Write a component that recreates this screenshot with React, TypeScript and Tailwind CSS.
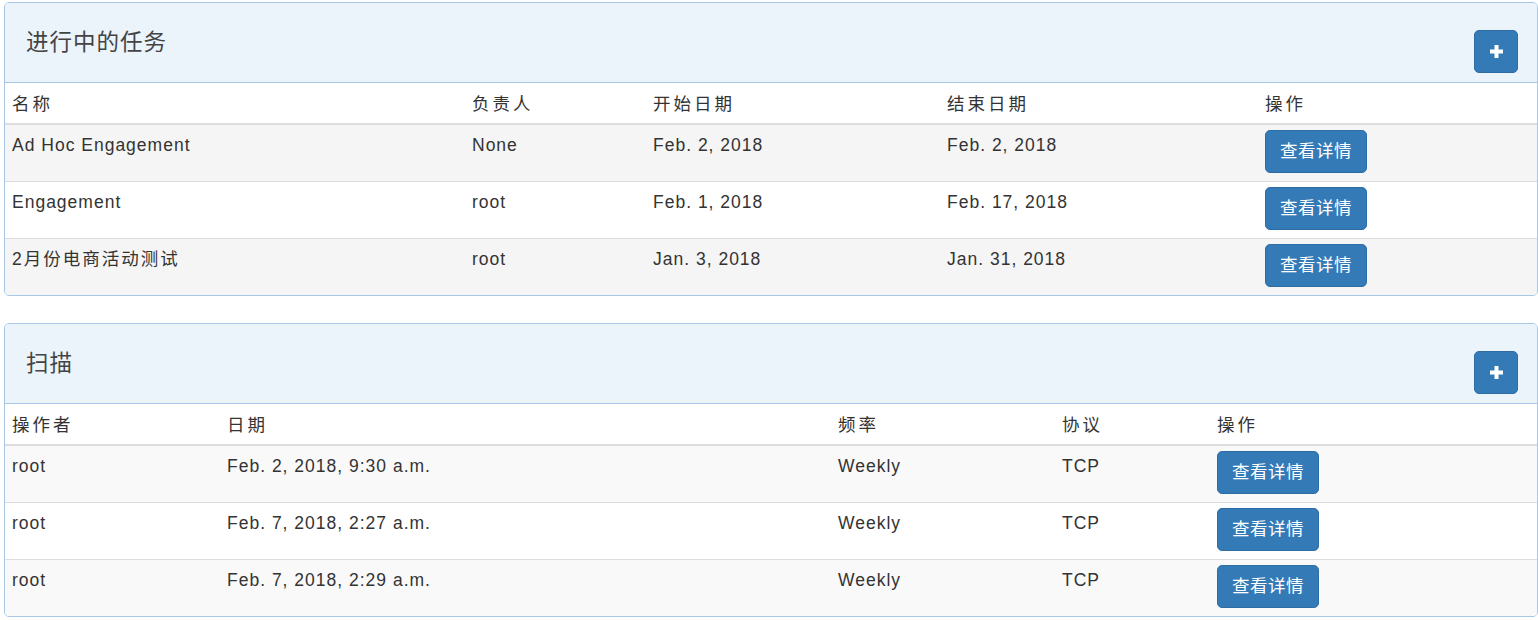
import React from "react";

const font = {
  fontFamily: '"Liberation Sans", Arial, "Noto Sans CJK SC", sans-serif',
};

const PlusButton = () => (
  <button className="mt-[27px] flex h-[43px] w-[44px] items-center justify-center rounded-[5px] border border-[#2e6da4] bg-[#337ab7]">
    <svg width="13" height="13" viewBox="0 0 13 13">
      <rect x="4.5" y="0" width="4" height="13" fill="#fff" />
      <rect x="0" y="4.5" width="13" height="4" fill="#fff" />
    </svg>
  </button>
);

const DetailButton = () => (
  <button className="h-[43px] w-[102px] rounded-[5px] border border-[#2e6da4] bg-[#337ab7] text-[17.5px] tracking-[0.5px] text-white">
    查看详情
  </button>
);

type PanelProps = {
  title: string;
  widths: string[];
  headers: string[];
  rows: string[][];
  stripe: string;
};

// CJK text in the shot is spaced wider than the latin text
const isCjk = (s: string) => /[\u4e00-\u9fff]/.test(s);

const Panel = ({ title, widths, headers, rows, stripe }: PanelProps) => {
  return (
    <div className="overflow-hidden rounded-[5px] border border-[#a8c8e6] bg-white">
      <div className="flex h-[80px] items-start justify-between border-b border-[#a8c8e6] bg-[#ebf3fb] pl-[21px] pr-[19px]">
        <h3 className="mt-[25px] text-[22.5px] leading-[30px] tracking-[1px] text-[#444]">
          {title}
        </h3>
        <PlusButton />
      </div>
      <table className="w-full table-fixed text-[17.5px] tracking-[1px] text-[#333]">
        <colgroup>
          {widths.map((w, i) => (
            <col key={i} style={{ width: w }} />
          ))}
          <col />
        </colgroup>
        <thead>
          <tr className="h-[41px] border-b-2 border-[#dddddd]">
            {headers.map((h) => (
              <th
                key={h}
                className="px-[7px] pt-[9px] text-left align-top font-normal leading-[25px] tracking-[3px] text-[#333]"
              >
                {h}
              </th>
            ))}
          </tr>
        </thead>
        <tbody>
          {rows.map((r, i) => (
            <tr
              key={i}
              className={
                "h-[57px] border-t border-[#dddddd] " +
                (i % 2 === 0 ? stripe : "bg-white")
              }
            >
              {r.map((c, j) => (
                <td
                  key={j}
                  className={
                    "px-[7px] pt-[8px] align-top leading-[25px] " +
                    (isCjk(c) ? "tracking-[2px]" : "")
                  }
                >
                  {c}
                </td>
              ))}
              <td className="px-[7px] pt-[5px] align-top">
                <DetailButton />
              </td>
            </tr>
          ))}
        </tbody>
      </table>
    </div>
  );
};

export default function App() {
  return (
    <div className="flex flex-col gap-[27px] bg-white pl-[4px] pt-[2px]" style={font}>
      <Panel
        title="进行中的任务"
        widths={["460px", "181px", "294px", "318px"]}
        headers={["名称", "负责人", "开始日期", "结束日期", "操作"]}
        stripe="bg-[#f5f5f5]"
        rows={[
          ["Ad Hoc Engagement", "None", "Feb. 2, 2018", "Feb. 2, 2018"],
          ["Engagement", "root", "Feb. 1, 2018", "Feb. 17, 2018"],
          ["2月份电商活动测试", "root", "Jan. 3, 2018", "Jan. 31, 2018"],
        ]}
      />
      <Panel
        title="扫描"
        widths={["215px", "611px", "224px", "155px"]}
        headers={["操作者", "日期", "频率", "协议", "操作"]}
        stripe="bg-[#f9f9f9]"
        rows={[
          ["root", "Feb. 2, 2018, 9:30 a.m.", "Weekly", "TCP"],
          ["root", "Feb. 7, 2018, 2:27 a.m.", "Weekly", "TCP"],
          ["root", "Feb. 7, 2018, 2:29 a.m.", "Weekly", "TCP"],
        ]}
      />
    </div>
  );
}
